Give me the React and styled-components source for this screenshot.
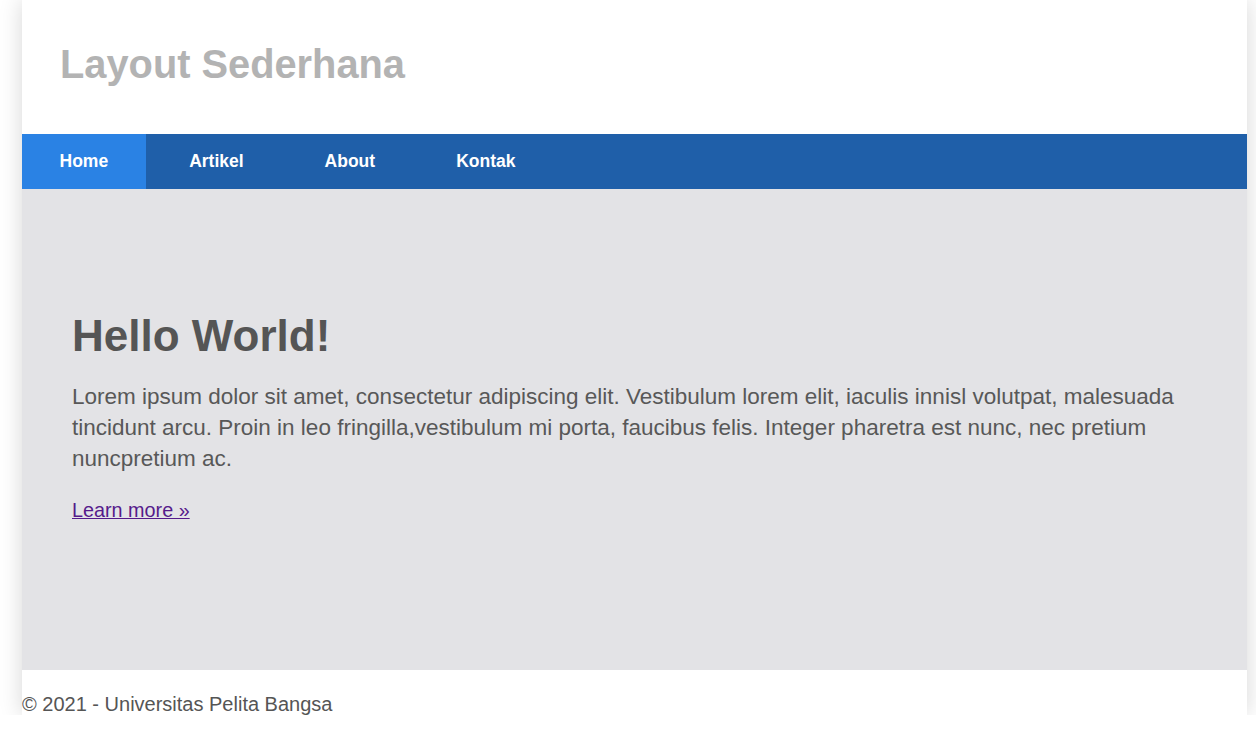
import styled, { createGlobalStyle } from 'styled-components';

const GlobalStyle = createGlobalStyle`
    body {
        margin: 0;
        background: #ffffff;
        font-family: "Liberation Sans", Arial, sans-serif;
    }
`;

const Container = styled.div`
    width: 1225px;
    margin-left: 22px;
    background: #ffffff;
    box-shadow: 0 0 22px rgba(0, 0, 0, 0.16);
`;

const Header = styled.header`
    height: 134px;
    box-sizing: border-box;
    padding: 42px 38px 0;
`;

const SiteTitle = styled.h1`
    margin: 0;
    font-size: 39.8px;
    font-weight: 700;
    color: #b3b3b3;
`;

const Nav = styled.nav`
    display: flex;
    gap: 6px;
    height: 55px;
    background: #1f5fa9;
`;

const NavLink = styled.a`
    display: flex;
    align-items: center;
    padding: 0 37.5px;
    font-size: 17.5px;
    font-weight: 700;
    color: #ffffff;
    text-decoration: none;
    background: ${({ $active }) => ($active ? '#2a82e4' : 'transparent')};
`;

const Hero = styled.section`
    height: 481px;
    box-sizing: border-box;
    padding: 122px 50px 0;
    background: #e3e3e6;
    color: #585858;
`;

const HeroTitle = styled.h2`
    margin: 0 0 20px;
    font-size: 44px;
    font-weight: 700;
    color: #555555;
`;

const HeroText = styled.p`
    margin: 0 0 20px;
    font-size: 22.5px;
    line-height: 31.2px;
`;

const MoreLink = styled.a`
    font-size: 19.8px;
    line-height: 31.2px;
    color: #551a8b;
    text-decoration: underline;
`;

const Footer = styled.footer`
    height: 45px;
    box-sizing: border-box;
    padding-top: 24px;
    font-size: 20px;
    line-height: 21px;
    color: #555555;
`;

const links = ['Home', 'Artikel', 'About', 'Kontak'];

export default function App() {
    return (
        <>
            <GlobalStyle />
            <Container>
                <Header>
                    <SiteTitle>Layout Sederhana</SiteTitle>
                </Header>
                <Nav>
                    {links.map((l, i) => (
                        <NavLink key={l} href="#" $active={i === 0}>{l}</NavLink>
                    ))}
                </Nav>
                <Hero>
                    <HeroTitle>Hello World!</HeroTitle>
                    <HeroText>
                        Lorem ipsum dolor sit amet, consectetur adipiscing elit. Vestibulum lorem elit, iaculis innisl volutpat, malesuada tincidunt arcu. Proin in leo fringilla,vestibulum mi porta, faucibus felis. Integer pharetra est nunc, nec pretium nuncpretium ac.
                    </HeroText>
                    <MoreLink href="#">Learn more &raquo;</MoreLink>
                </Hero>
                <Footer>&copy; 2021 - Universitas Pelita Bangsa</Footer>
            </Container>
        </>
    );
}
